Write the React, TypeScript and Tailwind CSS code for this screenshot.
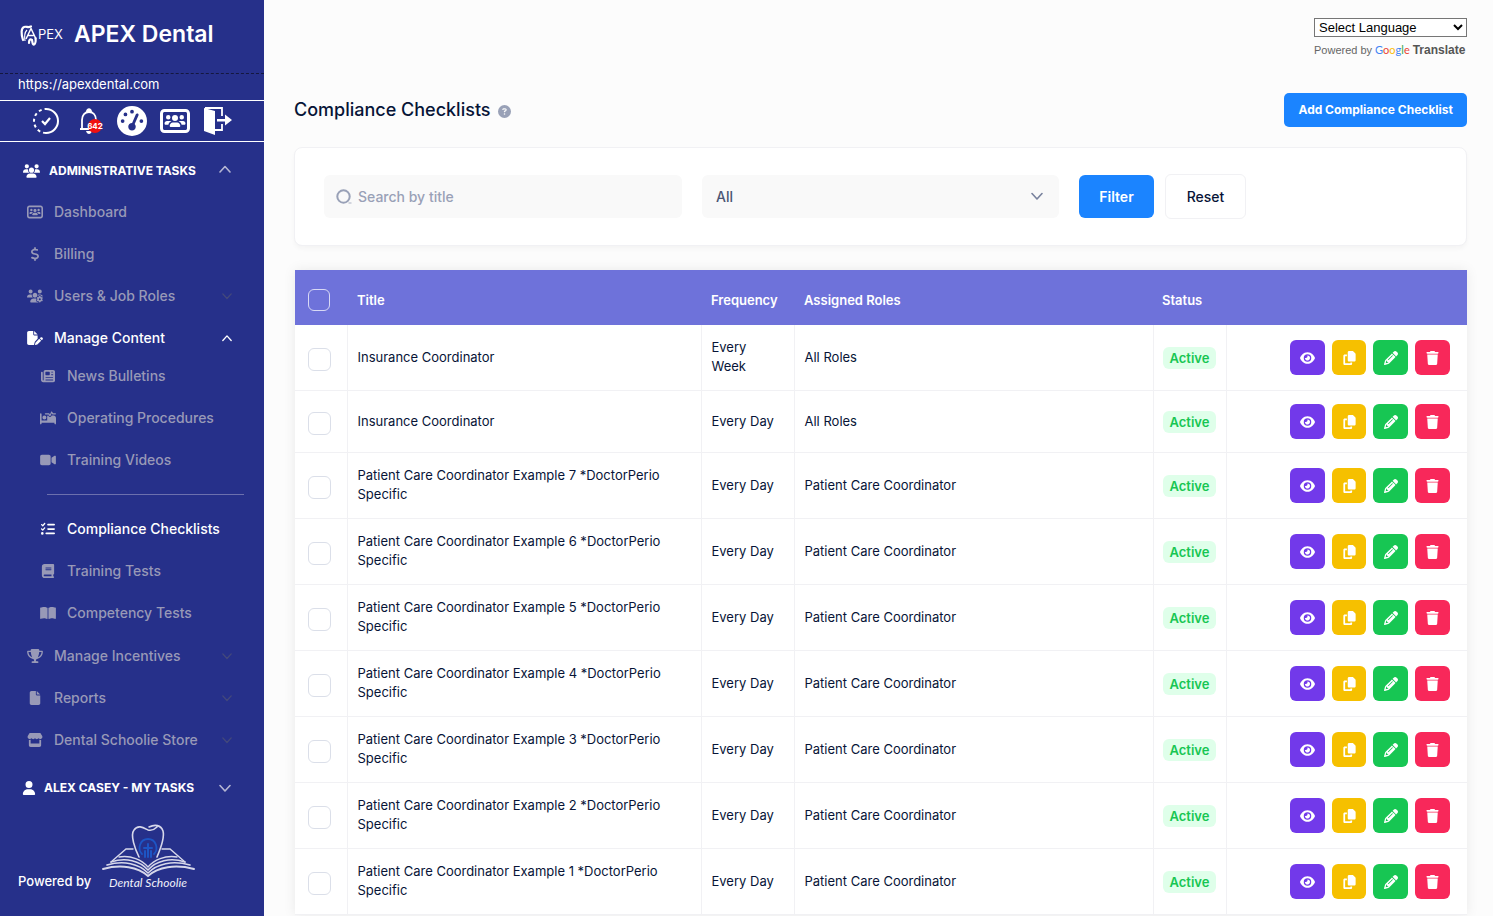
import React, { useState } from 'react';
import {
  FaUsers,
  FaUsersRectangle,
  FaDollarSign,
  FaUsersGear,
  FaFilePen,
  FaNewspaper,
  FaBedPulse,
  FaVideo,
  FaListCheck,
  FaBook,
  FaBookOpen,
  FaTrophy,
  FaFile,
  FaStore,
  FaUser,
  FaCircleQuestion,
  FaEye,
  FaCopy,
  FaPencil,
  FaTrash,
  FaGaugeHigh,
} from 'react-icons/fa6';
import { IconType } from 'react-icons';

interface Checklist {
  id: number;
  title: string;
  frequency: string;
  roles: string;
}

const checklists: Checklist[] = [
  { id: 1, title: 'Insurance Coordinator', frequency: 'Every Week', roles: 'All Roles' },
  { id: 2, title: 'Insurance Coordinator', frequency: 'Every Day', roles: 'All Roles' },
  ...[7, 6, 5, 4, 3, 2, 1].map((n) => ({
    id: 10 - n,
    title: `Patient Care Coordinator Example ${n} *DoctorPerio Specific`,
    frequency: 'Every Day',
    roles: 'Patient Care Coordinator',
  })),
];

const Chevron: React.FC<{ up?: boolean; className: string }> = ({ up, className }) => (
  <svg className={className} viewBox="0 0 12 12" fill="none" stroke="currentColor" strokeLinecap="round" strokeLinejoin="round">
    <path strokeWidth="1.6" d={up ? 'M1 9L6 3.5L11 9' : 'M1 3.5L6 9L11 3.5'} />
  </svg>
);

const ApexLogo: React.FC = () => (
  <svg className="h-6 w-12 shrink-0" viewBox="0 0 48 24" fill="none" stroke="white" aria-hidden="true">
    <path strokeWidth="2.2" strokeLinecap="round" d="M3 17C1 11 1 5 4 4C6 3 8 5 11 3.5" />
    <path strokeWidth="1.2" d="M5 18C4 12 5 9 7 7" />
    <path strokeWidth="1.5" strokeLinejoin="round" d="M6 16L11 5.500L16 16M8 12.500h6" />
    <path strokeWidth="2.2" strokeLinecap="round" d="M9 20C9 17 10 15.500 12 17C12.500 19 12.500 22 14 21.500C15.500 20.500 16 18 15.500 15" />
    <text x="18" y="15.500" fill="white" stroke="none" fontFamily="Inter, sans-serif" fontSize="13">PEX</text>
  </svg>
);

const SchoolieLogo: React.FC = () => (
  <svg className="h-18 w-24 shrink-0" viewBox="0 0 96 72" fill="none" stroke="#d6d7ea" strokeLinecap="round" role="img">
    <path strokeWidth="1.6" d="M38 34C34 26 29 12 33 7C37 1 43 5 47 7C51 8 54 6 56 4M48 4C54 1 60 2 62 8C64 15 59 27 56 34" />
    <path stroke="#1d55c4" strokeWidth="1.8" d="M41 31C36 26 39 16 47 16C55 16 58 26 53 31" />
    <path stroke="#1d55c4" strokeWidth="2" d="M44 34v-6M50 34v-6M47 34V21M43 25h8" />
    <path strokeWidth="1.4" d="M32 26H25L10 39M61 26H69L84 39" />
    <path strokeWidth="1.6" d="M10 39C25 34 39 38 47 47C55 38 69 34 84 39" />
    <path strokeWidth="1.6" d="M6 42C23 37 38 41 47 50C56 41 71 37 89 42" />
    <path strokeWidth="2" d="M2 46C20 41 37 44 47 53C57 44 74 41 93 46" />
    <path strokeWidth="1.400" d="M18 34C30 32 41 37 47 44C53 37 64 32 76 34" />
    <text x="47" y="64" textAnchor="middle" fill="#f0f0fa" stroke="none" fontFamily="Lato, sans-serif" fontStyle="italic" fontSize="12">
      Dental Schoolie
    </text>
  </svg>
);

interface NavItemProps {
  icon: IconType;
  label: string;
  arrow?: 'up' | 'down';
  active?: boolean;
  sub?: boolean;
}

const NavItem: React.FC<NavItemProps> = ({ icon: Icon, label, arrow, active, sub }) => (
  <li>
    <a
      href="#"
      className={`flex h-[42px] items-center pr-8 text-sm font-medium ${sub ? 'pl-10' : 'pl-[27px]'} ${active ? 'text-white' : 'text-[#9899b7]'}`}
    >
      <Icon className="mr-[11px] h-[14px] w-4" />
      <span className="flex-1 whitespace-nowrap">{label}</span>
      {arrow && <Chevron up={arrow === 'up'} className={active ? 'h-[10px] w-[10px]' : 'h-[10px] w-[10px] text-[#43487c]'} />}
    </a>
  </li>
);

const Sidebar: React.FC = () => (
  <aside className="w-[264px] shrink-0 bg-[#26308a] text-white">
    <div className="flex h-[73px] items-center gap-1.5 pl-5 pb-1">
      <ApexLogo />
      <span className="text-[23px] font-semibold whitespace-nowrap">APEX Dental</span>
    </div>
    <div className="h-[27px] border-t border-dashed border-[#14173f] pl-[18px]">
      <a href="#" className="block text-[13px] leading-5">https://apexdental.com</a>
    </div>
    <div className="flex h-[42px] items-center gap-[13px] border-y border-white pl-[33px]">
      <button aria-label="Progress">
        <svg className="h-7 w-7" viewBox="0 0 28 28" fill="none" stroke="white" strokeWidth="2">
          <path d="M13 2a12 12 0 0 1 0 24" />
          <path strokeDasharray="3 3" d="M13 26a12 12 0 0 1 0-24" />
          <path strokeWidth="2.2" d="M9 14l3 3l5-6" />
        </svg>
      </button>
      <button aria-label="Notifications" className="relative">
        <svg className="h-7 w-[30px]" viewBox="0 0 30 28" fill="none" stroke="white" strokeWidth="1.8">
          <path d="M8 21V13c0-5 3-8 7-8s7 3 7 8v8M6 22h18" />
          <path fill="white" stroke="none" d="M12 5c0-5 6-5 6 0zM12 24h6c-1 4-5 4-6 0z" />
        </svg>
        <span className="absolute top-3 left-[14px] flex h-[14px] w-[14px] items-center justify-center rounded-full bg-[#f01010] text-[8px] font-bold">642</span>
      </button>
      <button aria-label="Gauge"><FaGaugeHigh className="h-[30px] w-[30px]" /></button>
      <button aria-label="Team"><FaUsersRectangle className="h-[30px] w-[30px]" /></button>
      <button aria-label="Log out">
        <svg className="h-[30px] w-[30px]" viewBox="0 0 30 30" fill="white">
          <path d="M1 2L12 5V29L1 25z" />
          <path fill="none" stroke="white" strokeWidth="1.8" d="M2 2H19V10M19 18V24H12" />
          <path d="M14 13h8V8.500l7 5.500l-7 5.500V15.500h-8z" />
        </svg>
      </button>
    </div>
    <nav>
      <button className="flex h-[49px] w-full items-center pt-2 pl-[23px] pr-[33px] text-xs font-bold">
        <FaUsers className="mr-[9px] h-[14px] w-[17px]" />
        <span className="flex-1 text-left">ADMINISTRATIVE TASKS</span>
        <Chevron up className="mb-1 h-3 w-3 text-[#b5b6d3]" />
      </button>
      <ul>
        <NavItem icon={FaUsersRectangle} label="Dashboard" />
        <NavItem icon={FaDollarSign} label="Billing" />
        <NavItem icon={FaUsersGear} label="Users & Job Roles" arrow="down" />
        <NavItem icon={FaFilePen} label="Manage Content" arrow="up" active />
        <li>
          <ul className="-mt-1 mb-px">
            <NavItem icon={FaNewspaper} label="News Bulletins" sub />
            <NavItem icon={FaBedPulse} label="Operating Procedures" sub />
            <NavItem icon={FaVideo} label="Training Videos" sub />
            <li className="mt-[13px] mr-5 mb-[13px] ml-[47px] border-t border-[#6c70ad]" />
            <NavItem icon={FaListCheck} label="Compliance Checklists" active sub />
            <NavItem icon={FaBook} label="Training Tests" sub />
            <NavItem icon={FaBookOpen} label="Competency Tests" sub />
          </ul>
        </li>
        <NavItem icon={FaTrophy} label="Manage Incentives" arrow="down" />
        <NavItem icon={FaFile} label="Reports" arrow="down" />
        <NavItem icon={FaStore} label="Dental Schoolie Store" arrow="down" />
      </ul>
      <button className="flex h-[54px] w-full items-center pl-[22px] pr-[33px] text-xs font-bold">
        <FaUser className="mr-2 h-[14px] w-[14px]" />
        <span className="flex-1 text-left">ALEX CASEY - MY TASKS</span>
        <Chevron className="h-3 w-3 text-[#b5b6d3]" />
      </button>
    </nav>
    <div className="mt-2 flex items-end gap-[10px] pl-[18px]">
      <span className="pb-1 text-[13px] leading-5 font-medium">Powered by</span>
      <SchoolieLogo />
    </div>
  </aside>
);

const Actions: React.FC = () => (
  <div className="flex justify-end gap-[7px]">
    <button aria-label="View" className="flex h-[35px] w-[35px] items-center justify-center rounded-md bg-[#7239ea] text-white"><FaEye className="h-[14px] w-[15px]" /></button>
    <button aria-label="Copy" className="flex h-[35px] w-[34px] items-center justify-center rounded-md bg-[#f6c000] text-white"><FaCopy className="h-[14px] w-[13px]" /></button>
    <button aria-label="Edit" className="flex h-[35px] w-[35px] items-center justify-center rounded-md bg-[#17c653] text-white"><FaPencil className="h-[14px] w-[14px]" /></button>
    <button aria-label="Delete" className="flex h-[35px] w-[35px] items-center justify-center rounded-md bg-[#f8285a] text-white"><FaTrash className="h-[14px] w-[13px]" /></button>
  </div>
);

const App: React.FC = () => {
  const [search, setSearch] = useState('');
  const [selected, setSelected] = useState<number[]>([]);

  function toggle(id: number) {
    setSelected(selected.includes(id) ? selected.filter((x) => x !== id) : [...selected, id]);
  }

  function toggleAll() {
    setSelected(selected.length === checklists.length ? [] : checklists.map((c) => c.id));
  }

  return (
    <div className="flex min-h-screen bg-[#fcfcfc] font-[Inter,sans-serif] text-[#071437]">
      <Sidebar />
      <main className="min-w-0 flex-1 pt-[18px] pr-[26px] pl-[30px]">
        <div className="flex justify-end font-['Liberation_Sans',sans-serif]">
          <div className="w-[153px]">
            <select aria-label="Select Language" className="block h-[19px] w-full border border-[#767676] bg-white text-[13px] text-black">
              <option>Select Language</option>
            </select>
            <div className="mt-1 flex items-center gap-[3px] text-[11px] leading-[18px] whitespace-nowrap text-[#666]">
              <span>Powered by</span>
              <span className="font-[Lato,sans-serif] text-[11px]">
                <span className="text-[#4285f4]">G</span>
                <span className="text-[#ea4335]">o</span>
                <span className="text-[#fbbc05]">o</span>
                <span className="text-[#4285f4]">g</span>
                <span className="text-[#34a853]">l</span>
                <span className="text-[#ea4335]">e</span>
              </span>
              <span className="text-xs font-bold text-[#555]">Translate</span>
            </div>
          </div>
        </div>

        <div className="mt-[34px] flex items-center justify-between">
          <h1 className="flex items-center gap-[7px] text-lg font-medium">
            Compliance Checklists
            <FaCircleQuestion className="mt-[3px] h-[13px] w-[13px] text-[#99a1b7]" />
          </h1>
          <button className="h-[34px] rounded-[5px] bg-[#1b84ff] px-[14px] text-xs font-bold text-white">Add Compliance Checklist</button>
        </div>

        <form className="mt-5 flex h-[99px] items-center rounded-lg border border-[#f1f1f4] bg-white pl-[29px] shadow-[0_3px_4px_rgba(0,0,0,0.03)]" onSubmit={(e) => e.preventDefault()}>
          <label className="mr-5 flex h-[43px] w-[358px] items-center rounded-md bg-[#f9f9f9] pl-3">
            <svg className="mr-1.5 h-4 w-4 text-[#99a1b7]" viewBox="0 0 16 16" fill="none" stroke="currentColor">
              <circle cx="7.500" cy="7.500" r="6.200" strokeWidth="2" />
              <path strokeWidth="2" opacity="0.4" d="M12.500 14h3" />
            </svg>
            <input
              aria-label="Search by title"
              className="flex-1 bg-transparent text-sm font-medium outline-none placeholder:text-[#99a1b7]"
              placeholder="Search by title"
              value={search}
              onChange={(e) => setSearch(e.target.value)}
            />
          </label>
          <div className="relative mr-5 w-[357px]">
            <select aria-label="Status" className="block h-[43px] w-full appearance-none rounded-md bg-[#f9f9f9] px-[14px] text-sm font-medium text-[#4b5675]">
              <option>All</option>
            </select>
            <Chevron className="pointer-events-none absolute top-[15px] right-4 h-3 w-3 text-[#78829d]" />
          </div>
          <button className="mr-[11px] h-[43px] w-[75px] rounded-md bg-[#1b84ff] text-sm font-semibold text-white">Filter</button>
          <button type="reset" className="h-[45px] w-[81px] rounded-md border border-[#f1f1f4] bg-white text-sm font-medium">Reset</button>
        </form>

        <div className="mt-6 pl-px">
          <table className="w-full table-fixed border-collapse text-left text-[13px] shadow-[0_0_12px_rgba(0,0,0,0.08)]">
            <thead className="bg-[#6e72da] text-white">
              <tr className="h-[55px]">
                <th className="w-[52px] pl-[13px]">
                  <input type="checkbox" aria-label="Select all" className="mt-1 block h-[22px] w-[22px] appearance-none rounded-md border border-[#d8d9f5] checked:bg-[#1b84ff]" onChange={toggleAll} checked={selected.length === checklists.length} />
                </th>
                <th className="w-[354px] px-[10px] pt-[6px] font-semibold">Title</th>
                <th className="w-[93px] px-[10px] pt-[6px] font-semibold">Frequency</th>
                <th className="px-[10px] pt-[6px] font-semibold">Assigned Roles</th>
                <th className="w-[73px] px-[9px] pt-[6px] font-semibold">Status</th>
                <th className="w-[241px]" aria-label="Actions" />
              </tr>
            </thead>
            <tbody className="bg-white">
              {checklists.map((item) => (
                <tr key={item.id} className="h-[62px] border-b border-[#f1f1f4]">
                  <td className="border-r border-[#f1f1f4] pl-[13px]">
                    <input type="checkbox" aria-label={item.title} className="mt-1 block h-[23px] w-[23px] appearance-none rounded-md border border-[#dbdfe9] checked:bg-[#1b84ff]" onChange={() => toggle(item.id)} checked={selected.includes(item.id)} />
                  </td>
                  <td className="border-r border-[#f1f1f4] px-[10px] pt-[13px] pb-[14px] leading-[19px]">{item.title}</td>
                  <td className="border-r border-[#f1f1f4] px-[10px] pt-[13px] pb-[14px] leading-[19px]">{item.frequency}</td>
                  <td className="border-r border-[#f1f1f4] px-[10px] pt-[13px] pb-[14px] leading-[19px]">{item.roles}</td>
                  <td className="border-r border-[#f1f1f4] px-[9px]">
                    <span className="inline-block rounded-md bg-[#dfffea] px-[7px] text-[13px] leading-[22px] font-semibold text-[#17c653]">Active</span>
                  </td>
                  <td className="pr-[17px]"><Actions /></td>
                </tr>
              ))}
            </tbody>
          </table>
        </div>
      </main>
    </div>
  );
};

export default App;
